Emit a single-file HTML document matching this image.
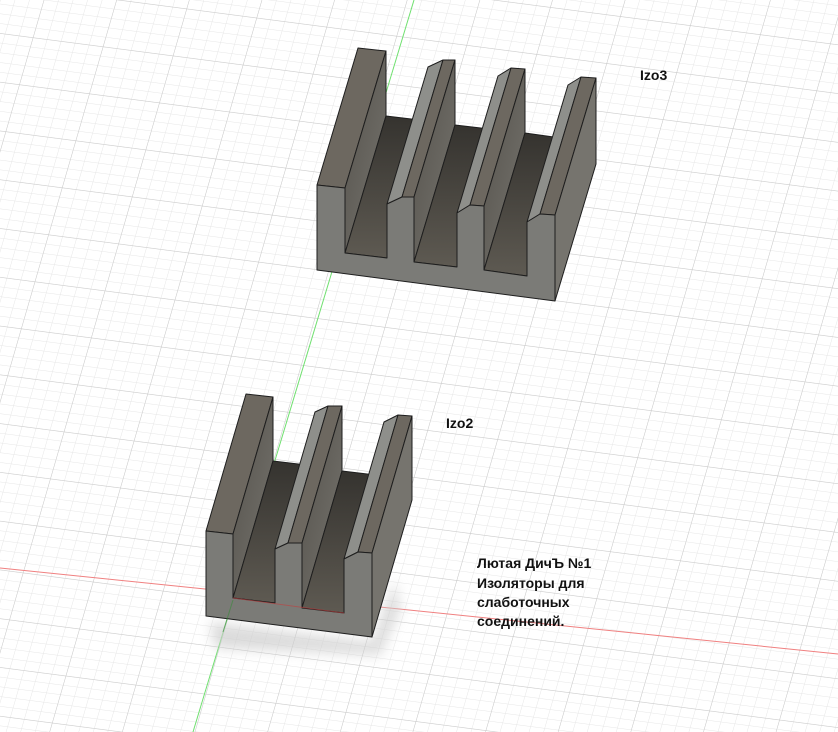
<!DOCTYPE html>
<html><head><meta charset="utf-8"><style>
html,body{margin:0;padding:0;background:#fff;width:838px;height:732px;overflow:hidden}
svg{display:block}
text{font-family:"Liberation Sans","DejaVu Sans",sans-serif;font-weight:bold;font-size:14px;fill:#111}
</style></head><body>
<svg width="838" height="732" viewBox="0 0 838 732" xmlns="http://www.w3.org/2000/svg">
<defs>
<pattern id="minor" patternUnits="userSpaceOnUse" x="0.2" y="3.6" width="14" height="9.4" patternTransform="matrix(1 0.13 -0.29 1 0 0)">
<path d="M0 0H14M0 0V9.4" stroke="#e6e6e6" stroke-width="1" fill="none"/>
</pattern>
<pattern id="major" patternUnits="userSpaceOnUse" x="42.2" y="32" width="70" height="47" patternTransform="matrix(1 0.13 -0.29 1 0 0)">
<path d="M0 0H70M0 0V47" stroke="#cacaca" stroke-width="1" fill="none"/>
</pattern>
<filter id="blur" x="-50%" y="-50%" width="200%" height="200%"><feGaussianBlur stdDeviation="6"/></filter>
<linearGradient id="rf" x1="0" y1="0" x2="1" y2="1"><stop offset="0" stop-color="#55524c"/><stop offset="1" stop-color="#76746e"/></linearGradient>
<linearGradient id="fl" x1="0" y1="0" x2="0" y2="1"><stop offset="0" stop-color="#35332f"/><stop offset="1" stop-color="#5e5a52"/></linearGradient>
</defs>
<rect width="838" height="732" fill="#fff"/>
<rect width="838" height="732" fill="url(#minor)"/>
<rect width="838" height="732" fill="url(#major)"/>
<line x1="0" y1="568" x2="838" y2="654" stroke="#f08080" stroke-width="1"/>
<line x1="414" y1="0" x2="193" y2="732" stroke="#6fe06f" stroke-width="1"/>

<polygon points="210,622 372,642 395,580 400,610 380,655 215,648" fill="#ccc" filter="url(#blur)" opacity="0.7"/>

<g stroke="#1e1e1e" stroke-width="1" stroke-linejoin="round">
<polygon points="317,185 345,188 386,51 358,48" fill="#6d6860"/>
<polygon points="345,188 386,51 386,116 345,253" fill="url(#rf)"/>
<polygon points="345,253 387,258 428,121 386,116" fill="url(#fl)"/>
<polygon points="387,204 402,197 443,60 428,67" fill="#8e8f8b"/>
<polygon points="402,197 414,197 455,60 443,60" fill="#6d6860"/>
<polygon points="414,197 455,60 455,125 414,262" fill="url(#rf)"/>
<polygon points="414,262 457,267 498,130 455,125" fill="url(#fl)"/>
<polygon points="457,213 470,205 511,68 498,76" fill="#8e8f8b"/>
<polygon points="470,205 484,206 525,69 511,68" fill="#6d6860"/>
<polygon points="484,206 525,69 525,133 484,270" fill="url(#rf)"/>
<polygon points="484,270 527,276 568,139 525,133" fill="url(#fl)"/>
<polygon points="527,222 540,214 581,77 568,85" fill="#8e8f8b"/>
<polygon points="540,214 555,215 596,78 581,77" fill="#6d6860"/>
<polygon points="555,215 596,78 596,164 555,301" fill="#76746e"/>
<polygon points="317,185 345,188 345,253 387,258 387,204 402,197 414,197 414,262 457,267 457,213 470,205 484,206 484,270 527,276 527,222 540,214 555,215 555,301 317,270" fill="#7b7b77"/>

<polygon points="206,531 233,534 273,397 246,394" fill="#6d6860"/>
<polygon points="233,534 273,397 273,461 233,598" fill="url(#rf)"/>
<polygon points="233,598 275,603 315,466 273,461" fill="url(#fl)"/>
<polygon points="275,549 288,543 328,406 315,412" fill="#8e8f8b"/>
<polygon points="288,543 302,543 342,406 328,406" fill="#6d6860"/>
<polygon points="302,543 342,406 342,471 302,608" fill="url(#rf)"/>
<polygon points="302,608 344,613 384,476 342,471" fill="url(#fl)"/>
<polygon points="344,559 358,552 398,415 384,422" fill="#8e8f8b"/>
<polygon points="358,552 372,553 412,416 398,415" fill="#6d6860"/>
<polygon points="372,553 412,416 412,500 372,637" fill="#76746e"/>
<polygon points="206,531 233,534 233,598 275,603 275,549 288,543 302,543 302,608 344,613 344,559 358,552 372,553 372,637 206,616" fill="#7b7b77"/>
</g>
<line x1="233" y1="598" x2="344" y2="613" stroke="#c04040" stroke-width="1" opacity="0.6"/>
<line x1="233" y1="600" x2="223" y2="632" stroke="#3a8a3a" stroke-width="1" opacity="0.6"/>

<text x="640" y="80">Izo3</text>
<text x="446" y="428">Izo2</text>
<text x="477" y="568">Лютая ДичЪ №1</text>
<text x="477" y="588">Изоляторы для</text>
<text x="477" y="607">слаботочных</text>
<text x="477" y="626">соединений.</text>
</svg>
</body></html>
